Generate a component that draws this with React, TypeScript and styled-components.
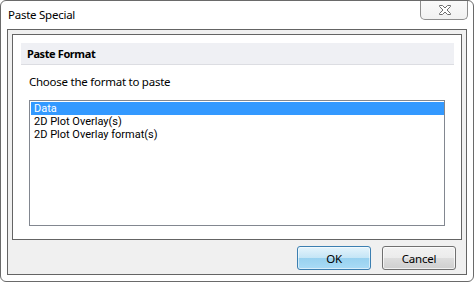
import styled, { createGlobalStyle } from "styled-components";

const GlobalStyle = createGlobalStyle`
  html, body {
    margin: 0;
    padding: 0;
    background: #ffffff;
  }
  * {
    box-sizing: border-box;
  }
`;

const font = `"Noto Sans", "Open Sans", sans-serif`;
const listFont = `Roboto, "Noto Sans", sans-serif`;

const Window = styled.div`
  width: 474px;
  height: 282px;
  border: 1px solid #6a6a6a;
  border-radius: 6px;
  background: #ffffff;
  font-family: ${font};
  font-size: 11.5px;
  letter-spacing: -0.25px;
  color: #000;
  display: flex;
  flex-direction: column;
  overflow: hidden;
`;

const TitleBar = styled.div`
  height: 28px;
  display: flex;
  align-items: flex-start;
  justify-content: space-between;
  padding-left: 7px;
  padding-right: 5px;
`;

const Title = styled.span`
  line-height: 16px;
  margin-top: 6px;
`;

const CloseButton = styled.button`
  width: 48px;
  height: 20px;
  margin-top: -1px;
  border: 1px solid #8e8e8e;
  border-top: none;
  border-radius: 0 0 5px 5px;
  background: linear-gradient(#fbfbfb, #f1f1f1);
  display: flex;
  align-items: center;
  justify-content: center;
  padding: 0 0 0 2px;
`;

const Client = styled.div`
  margin: 0 6px;
  height: 246px;
  border: 1px solid #646464;
  background: #f0f0f0;
  padding: 4px;
  display: flex;
  flex-direction: column;
`;

const Panel = styled.div`
  height: 206px;
  border: 1px solid #646464;
  background: #ffffff;
  padding: 8px 7px 0 8px;
  display: flex;
  flex-direction: column;
`;

const SectionHeader = styled.div`
  height: 22px;
  background: #eff0f4;
  border-bottom: 1px solid #dcdde2;
  padding-left: 6px;
  font-size: 11px;
  font-weight: bold;
  letter-spacing: -0.4px;
  line-height: 21px;
`;

const Prompt = styled.div`
  margin: 9px 0 0 8px;
  line-height: 16px;
`;

const ListBox = styled.div`
  margin: 10px 9px 0 8px;
  height: 126px;
  border: 1px solid #828790;
  padding: 1px 0 0 1px;
  overflow: hidden;
`;

const ListItem = styled.div<{ $selected?: boolean }>`
  height: 13px;
  line-height: 13px;
  font-family: ${listFont};
  font-size: 11px;
  letter-spacing: 0;
  padding-left: 3px;
  white-space: nowrap;
  overflow: hidden;
  background: ${(p) => (p.$selected ? "#3399ff" : "transparent")};
  color: ${(p) => (p.$selected ? "#ffffff" : "#000000")};
`;

const ButtonRow = styled.div`
  margin-top: 6px;
  display: flex;
  justify-content: flex-end;
  gap: 11px;
  padding-right: 6px;
`;

const DialogButton = styled.button<{ $default?: boolean }>`
  width: 74px;
  height: 24px;
  border-radius: 3px;
  font-family: ${font};
  font-size: 11.5px;
  letter-spacing: -0.25px;
  color: #000;
  padding: 0;
  border: 1px solid ${(p) => (p.$default ? "#3c7fb1" : "#707070")};
  background: ${(p) =>
    p.$default
      ? "linear-gradient(#e5f4fc 0%, #c4e5f6 50%, #98d1ef 51%, #a9dbf6 100%)"
      : "linear-gradient(#f2f2f2 0%, #ebebeb 50%, #dddddd 51%, #cfcfcf 100%)"};
  box-shadow: inset 0 0 0 1px
    ${(p) => (p.$default ? "rgba(255,255,255,0.55)" : "rgba(255,255,255,0.7)")};
`;

function CloseGlyph() {
  return (
    <svg width="12" height="10" viewBox="0 0 12 10">
      <path
        d="M0.5 0.5 H3.5 L6 3 L8.5 0.5 H11.5 V1.5 L8 5 L11.5 8.5 V9.5 H8.5 L6 7 L3.5 9.5 H0.5 V8.5 L4 5 L0.5 1.5 Z"
        fill="#ffffff"
        stroke="#6e6e6e"
        strokeWidth="1"
      />
    </svg>
  );
}

export default function App() {
  return (
    <>
      <GlobalStyle />
      <Window>
        <TitleBar>
          <Title>Paste Special</Title>
          <CloseButton aria-label="Close">
            <CloseGlyph />
          </CloseButton>
        </TitleBar>
        <Client>
          <Panel>
            <SectionHeader>Paste Format</SectionHeader>
            <Prompt>Choose the format to paste</Prompt>
            <ListBox>
              <ListItem $selected>Data</ListItem>
              <ListItem>2D Plot Overlay(s)</ListItem>
              <ListItem>2D Plot Overlay format(s)</ListItem>
            </ListBox>
          </Panel>
          <ButtonRow>
            <DialogButton $default>OK</DialogButton>
            <DialogButton>Cancel</DialogButton>
          </ButtonRow>
        </Client>
      </Window>
    </>
  );
}
